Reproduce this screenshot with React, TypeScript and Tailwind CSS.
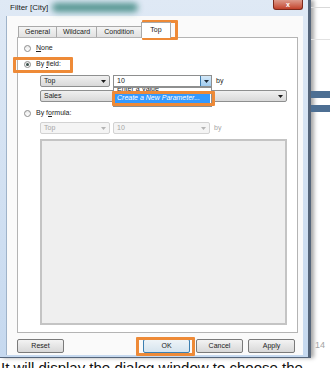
import React from "react";

const Arrow = ({ color = "#1a1a1a" }: { color?: string }) => (
  <svg width="5" height="3" viewBox="0 0 5 3" className="shrink-0">
    <polygon points="0,0 5,0 2.5,3" fill={color} />
  </svg>
);

const Radio = ({ checked = false }: { checked?: boolean }) => (
  <span className="flex h-[7px] w-[7px] shrink-0 items-center justify-center rounded-full border border-[#8d8d8d] bg-gradient-to-b from-[#e9e9e9] to-[#ffffff]">
    {checked && <span className="h-[3px] w-[3px] rounded-full bg-[#3a4f4a]" />}
  </span>
);

const Tab = ({ label, w }: { label: string; w: string }) => (
  <div
    className={`${w} -ml-px flex h-[11px] items-center justify-center border border-b-0 border-[#a9a9a9] bg-gradient-to-b from-[#f4f4f4] to-[#e1e1e1] text-[7px] text-[#222]`}
  >
    {label}
  </div>
);

const Combo = ({
  label,
  w,
  disabled = false,
}: {
  label: string;
  w: string;
  disabled?: boolean;
}) => (
  <div
    className={`${w} flex h-full items-center justify-between rounded-[2px] border px-[3px] text-[7px] ${
      disabled
        ? "border-[#d2d2d2] bg-[#f4f4f4] text-[#a6a6a6]"
        : "border-[#8e8f8f] bg-gradient-to-b from-[#f0f0f0] to-[#d9d9d9] text-[#1a1a1a]"
    }`}
  >
    <span>{label}</span>
    <Arrow color={disabled ? "#b4b4b4" : "#1a1a1a"} />
  </div>
);

const Button = ({ label, primary = false }: { label: string; primary?: boolean }) => (
  <div
    className={`flex h-[14px] w-[47px] items-center justify-center rounded-[2px] border text-[7px] text-[#222] ${
      primary
        ? "border-[#3c7fb1] bg-gradient-to-b from-[#eef4f8] to-[#d6e4ee]"
        : "border-[#7a7a7a] bg-gradient-to-b from-[#f3f3f3] to-[#d8d8d8]"
    }`}
  >
    {label}
  </div>
);

const Highlight = ({ className }: { className: string }) => (
  <div className={`absolute rounded-[1px] border-[3px] border-[#ee8a37] ${className}`} />
);

const Window = () => (
  <div className="flex h-[358px] w-[311px] shrink-0 flex-col border-r-[3px] border-b border-[#55657a] bg-gradient-to-b from-[#dfe9f5] to-[#c6d9ef] shadow-[3px_0_4px_rgba(0,0,0,0.35)]">
    {/* title bar */}
    <div className="flex h-[16px] shrink-0 items-start">
      <span className="ml-[10px] mt-[3px] text-[8px] leading-[10px] text-[#1b1b1b]">
        Filter [City]
      </span>
      <div className="ml-[4px] mt-[3px] h-[9px] w-[86px] rounded-full bg-[#2f7f76] opacity-80 blur-[3px]" />
      <div className="ml-auto mr-[5px] flex h-[10px] w-[30px] items-center justify-center rounded-b-[3px] border border-t-0 border-[#7d2a1c] bg-gradient-to-b from-[#dc9a8b] to-[#c2412a] text-[7px] font-bold leading-none text-white">
        x
      </div>
    </div>

    {/* body */}
    <div className="ml-[6px] mr-[5px] flex h-[339px] flex-col border-l border-[#9fb3c9] bg-[#fafafa] pl-[10px] pr-[5px] pt-[6px]">
      <div className="flex h-[15px] items-end pl-[2px]">
        <Tab label="General" w="w-[39px]" />
        <Tab label="Wildcard" w="w-[41px]" />
        <Tab label="Condition" w="w-[46px]" />
        <div className="relative z-10 -mb-px -ml-px flex h-[16px] w-[30px] items-center justify-center border border-b-0 border-[#a9a9a9] bg-white text-[7px] text-[#222]">
          Top
        </div>
      </div>

      <div className="flex h-[296px] flex-col border border-[#b4b4b4] bg-white">
        <div className="ml-[6px] mt-[5px] flex h-[10px] items-center gap-[5px] text-[7px] text-[#222]">
          <Radio />
          <span>
            <u>N</u>one
          </span>
        </div>
        <div className="ml-[6px] mt-[6px] flex h-[10px] items-center gap-[5px] text-[7px] text-[#222]">
          <Radio checked />
          <span>
            By <u>f</u>ield:
          </span>
        </div>
        <div className="ml-[22px] mt-[6px] flex h-[12px] items-center">
          <Combo label="Top" w="w-[70px]" />
          <div className="ml-[3px] flex h-full w-[99px] items-center justify-between border border-[#8e8f8f] bg-white pl-[3px] text-[7px] text-[#1a1a1a]">
            <span>10</span>
            <div className="flex h-full w-[11px] items-center justify-center border-l border-[#3d7bad] bg-gradient-to-b from-[#d5e9f8] to-[#9fcbef]">
              <Arrow color="#1d2a3a" />
            </div>
          </div>
          <span className="ml-[4px] text-[7px] text-[#222]">by</span>
        </div>
        <div className="ml-[22px] mt-[3px] flex h-[12px]">
          <Combo label="Sales" w="w-[247px]" />
        </div>
        <div className="ml-[6px] mt-[6px] flex h-[10px] items-center gap-[5px] text-[7px] text-[#222]">
          <Radio />
          <span>
            By f<u>o</u>rmula:
          </span>
        </div>
        <div className="ml-[22px] mt-[4px] flex h-[12px] items-center">
          <Combo label="Top" w="w-[70px]" disabled />
          <div className="ml-[3px] h-full">
            <Combo label="10" w="w-[97px]" disabled />
          </div>
          <span className="ml-[4px] text-[7px] text-[#a6a6a6]">by</span>
        </div>
        <div className="ml-[22px] mt-[5px] h-[186px] w-[247px] border-2 border-[#c4c4c4] bg-[#efefef]" />
      </div>

      <div className="mt-[6px] flex h-[14px]">
        <div className="w-[48px]">
          <Button label="Reset" />
        </div>
        <div className="ml-[78px]">
          <Button label="OK" primary />
        </div>
        <div className="ml-[6px]">
          <Button label="Cancel" />
        </div>
        <div className="ml-[5px]">
          <Button label="Apply" />
        </div>
      </div>
    </div>
  </div>
);

const Backdrop = () => (
  <div className="flex flex-1 flex-col">
    <div className="mt-[7px] h-px bg-[#d9d9d9]" />
    <div className="mt-[31px] h-px bg-[#e2e2e2]" />
    <div className="mt-[51px] h-[7px] bg-[#4d6f93]" />
    <div className="mt-[7px] h-[7px] bg-[#4d6f93]" />
    <span className="ml-[4px] mt-[228px] text-[9px] leading-[10px] text-[#a3a3a3]">14</span>
  </div>
);

export default function App() {
  return (
    <div className="relative h-[368px] w-[330px] overflow-hidden bg-white font-['Liberation_Sans',Arial,sans-serif]">
      <div className="flex h-[358px]">
        <Window />
        <Backdrop />
      </div>
      <p className="mt-[2px] pl-[1px] text-[15px] leading-[16px] whitespace-nowrap text-[#111]">
        It will display the dialog window to choose the
      </p>

      {/* open drop-down list */}
      <div className="absolute left-[113px] top-[87px] z-20 flex w-[99px] flex-col border border-[#8e8f8f] bg-white">
        <div className="h-[5px] overflow-hidden">
          <div className="-mt-[4px] pl-[3px] text-[7px] leading-[9px] text-[#222]">Enter a Value</div>
        </div>
        <div className="mx-[1px] mt-[1px] flex h-[9px] items-center bg-[#3399ff] pl-[2px] text-[7px] italic text-white">
          Create a New Parameter...
        </div>
        <div className="h-[3px]" />
      </div>

      <Highlight className="left-[142px] top-[20px] h-[20px] w-[36px]" />
      <Highlight className="left-[13px] top-[57px] h-[16px] w-[60px]" />
      <Highlight className="left-[112px] top-[91px] z-30 h-[15px] w-[103px]" />
      <Highlight className="left-[136px] top-[337px] h-[19px] w-[59px]" />
    </div>
  );
}
